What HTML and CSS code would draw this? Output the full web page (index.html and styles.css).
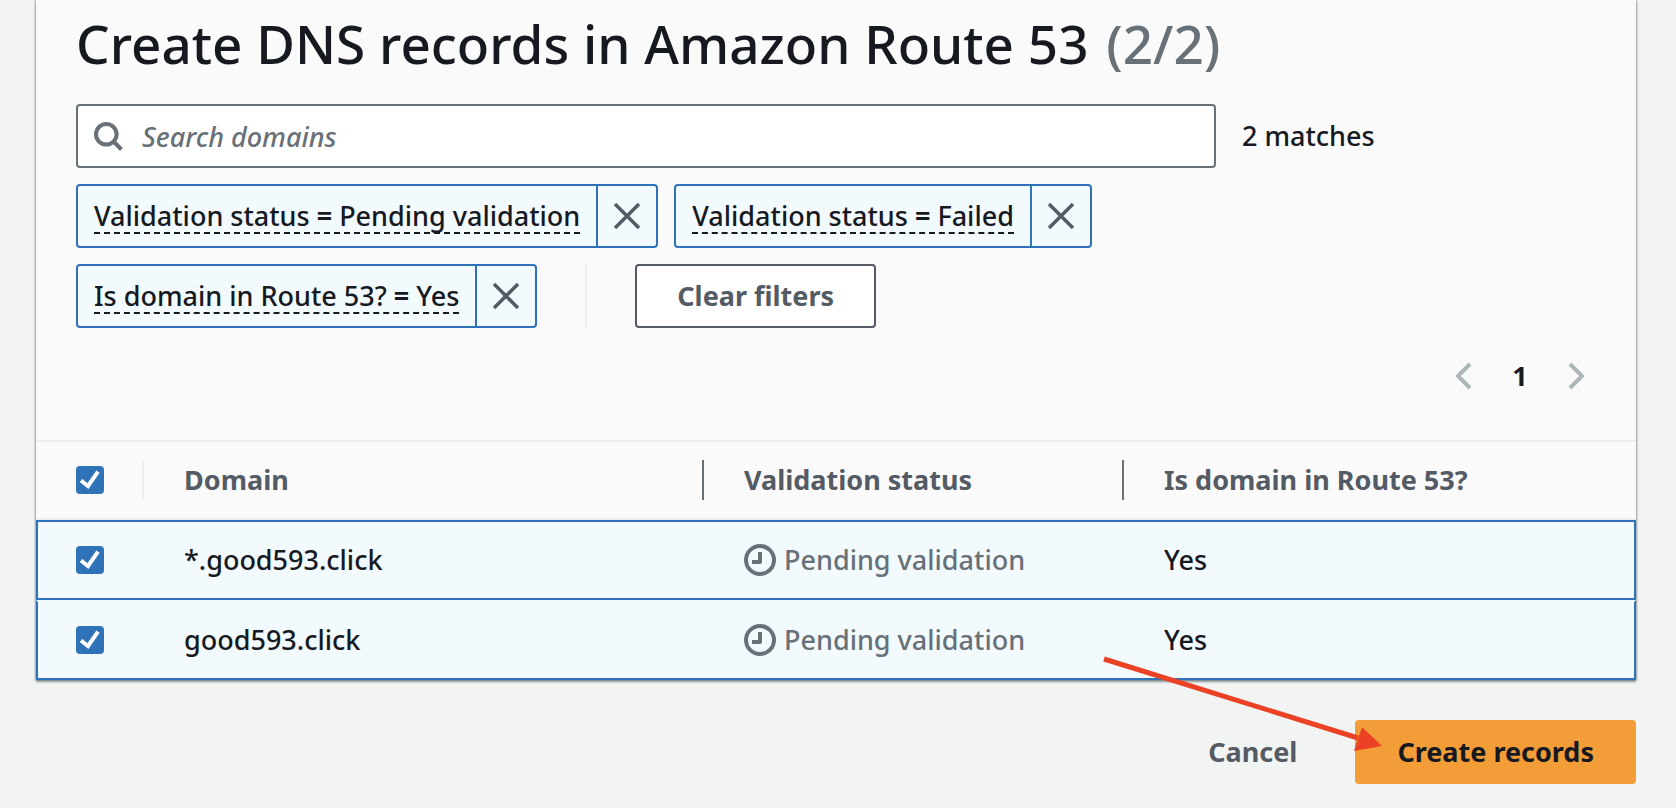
FILE: index.html
```html
<!DOCTYPE html>
<html lang="en">
<head>
<meta charset="utf-8">
<title>Create DNS records in Amazon Route 53</title>
<link rel="stylesheet" href="styles.css">
</head>
<body>
<main class="page">
  <section class="card">
    <header class="card-header">
      <h1 class="title">Create DNS records in Amazon Route 53 <span class="counter">(2/2)</span></h1>
      <div class="search-row">
        <label class="search">
          <svg class="search-icon" viewBox="0 0 32 32" aria-hidden="true"><circle cx="12.300" cy="14.300" r="10.300"/><path d="M19 21l8.500 8.500"/></svg>
          <input class="search-input" type="search" placeholder="Search domains" aria-label="Search domains">
        </label>
        <span class="matches">2 matches</span>
      </div>
      <div class="filters">
        <div class="token"><button class="token-label"><span class="token-text">Validation status <b>=</b> Pending validation</span></button><button class="token-remove" aria-label="Remove filter"><svg class="icon-close" viewBox="0 0 32 32" aria-hidden="true"><path d="M4 4l24 24M28 4L4 28"/></svg></button></div>
        <div class="token"><button class="token-label"><span class="token-text">Validation status <b>=</b> Failed</span></button><button class="token-remove" aria-label="Remove filter"><svg class="icon-close" viewBox="0 0 32 32" aria-hidden="true"><path d="M4 4l24 24M28 4L4 28"/></svg></button></div>
        <div class="token"><button class="token-label"><span class="token-text">Is domain in Route 53? <b>=</b> Yes</span></button><button class="token-remove" aria-label="Remove filter"><svg class="icon-close" viewBox="0 0 32 32" aria-hidden="true"><path d="M4 4l24 24M28 4L4 28"/></svg></button></div>
        <span class="separator"></span>
        <button class="button button-normal">Clear filters</button>
      </div>
      <nav class="pagination" aria-label="Pagination">
        <button class="page-arrow" disabled aria-label="Previous page"><svg class="icon-chevron" viewBox="0 0 32 32" aria-hidden="true"><path d="M22 4L10 16l12 12"/></svg></button>
        <button class="page-number" aria-current="page">1</button>
        <button class="page-arrow" disabled aria-label="Next page"><svg class="icon-chevron" viewBox="0 0 32 32" aria-hidden="true"><path d="M10 4l12 12-12 12"/></svg></button>
      </nav>
    </header>
    <table class="table">
      <colgroup><col class="col-select"><col class="col-domain"><col class="col-status"><col class="col-route"></colgroup>
      <thead>
        <tr>
          <th class="select-cell"><input class="checkbox" type="checkbox" checked aria-label="Select all domains"></th>
          <th>Domain</th>
          <th>Validation status</th>
          <th>Is domain in Route 53?</th>
        </tr>
      </thead>
      <tbody>
        <tr>
          <td class="select-cell"><input class="checkbox" type="checkbox" checked aria-label="Select *.good593.click"></td>
          <td>*.good593.click</td>
          <td><span class="status"><svg class="icon-clock" viewBox="0 0 32 32" aria-hidden="true"><circle cx="16" cy="16" r="14"/><path d="M16 8v10H8"/></svg>Pending validation</span></td>
          <td>Yes</td>
        </tr>
        <tr>
          <td class="select-cell"><input class="checkbox" type="checkbox" checked aria-label="Select good593.click"></td>
          <td>good593.click</td>
          <td><span class="status"><svg class="icon-clock" viewBox="0 0 32 32" aria-hidden="true"><circle cx="16" cy="16" r="14"/><path d="M16 8v10H8"/></svg>Pending validation</span></td>
          <td>Yes</td>
        </tr>
      </tbody>
    </table>
  </section>
  <footer class="actions">
    <button class="button button-link">Cancel</button>
    <button class="button button-primary">Create records</button>
    <svg class="pointer" viewBox="0 0 280 96" aria-hidden="true"><path class="pointer-line" d="M2 3L256 82"/><path class="pointer-head" d="M260 71L252 95l28-5z"/></svg>
  </footer>
</main>
</body>
</html>
```
FILE: styles.css
```css
* {
  box-sizing: border-box;
}

body {
  margin: 0;
  background: #f2f3f3;
  color: #16191f;
  font: 500 27px/40px "Noto Sans", "Open Sans", sans-serif;
}

button,
input {
  font: inherit;
  color: inherit;
}

button {
  margin: 0;
  padding: 0;
  border: 0;
  background: none;
}

svg {
  display: block;
  fill: none;
}

.page {
  padding: 0 40px 24px 36px;
}

.card {
  background: #fafafa;
  box-shadow: 0 2px 2px rgba(0, 28, 36, 0.4), 1px 0 2px rgba(0, 28, 36, 0.25), -1px 0 2px rgba(0, 28, 36, 0.25);
}

.card-header {
  padding: 8px 40px 32px;
  border-bottom: 2px solid #eaeded;
}

.title {
  margin: 0 0 24px;
  font-size: 53px;
  line-height: 72px;
  font-weight: 500;
}

.counter {
  margin-left: 4px;
  color: #687078;
}

.search-row {
  display: flex;
  align-items: center;
  gap: 26px;
  margin-bottom: 16px;
}

.search {
  display: flex;
  align-items: center;
  gap: 16px;
  width: 75%;
  height: 64px;
  padding: 0 16px;
  border: 2px solid #687078;
  border-radius: 4px;
  background: #fff;
}

.search-icon {
  flex: none;
  width: 32px;
  height: 32px;
  stroke: #687078;
  stroke-width: 4;
}

.search-input {
  flex: 1;
  min-width: 0;
  padding: 2px 0 0;
  border: 0;
  outline: 0;
  background: none;
}

.search-input::placeholder {
  color: #687078;
  font-style: italic;
  opacity: 1;
}

.filters {
  display: flex;
  flex-wrap: wrap;
  gap: 16px;
  width: 75%;
}

.token {
  display: flex;
  height: 64px;
  border: 2px solid #2e73b8;
  border-radius: 4px;
  background: #f2fafd;
}

.token-label {
  padding: 2px 16px 0;
}

.token-text {
  display: block;
  line-height: 32px;
  border-bottom: 2px dashed #16191f;
}

.token-remove {
  display: flex;
  align-items: center;
  justify-content: center;
  width: 60px;
  border-left: 2px solid #2e73b8;
}

.icon-close {
  width: 32px;
  height: 32px;
  stroke: #545b64;
  stroke-width: 3.5;
}

.separator {
  width: 2px;
  height: 64px;
  margin: 0 32px;
  background: #eaeded;
}

.button {
  height: 64px;
  padding: 0 40px;
  border: 2px solid transparent;
  border-radius: 4px;
  font-weight: 700;
}

.button-normal {
  border-color: #545b64;
  background: #fff;
  color: #545b64;
}

.button-link {
  color: #545b64;
}

.button-primary {
  border: 0;
  padding: 0 42px;
  background: #f29d38;
}

.pagination {
  display: flex;
  justify-content: flex-end;
  align-items: center;
  gap: 24px;
  margin-top: 16px;
  padding: 12px 4px;
}

.page-arrow,
.page-number {
  width: 32px;
  height: 40px;
  font-weight: 700;
}

.page-arrow {
  display: flex;
  align-items: center;
}

.icon-chevron {
  width: 32px;
  height: 32px;
  stroke: #aab7b8;
  stroke-width: 4;
}

.table {
  width: 100%;
  border-collapse: separate;
  border-spacing: 0;
  table-layout: fixed;
}

.col-select {
  width: 108px;
}

.col-domain {
  width: 35%;
}

.col-status {
  width: 420px;
}

.table th,
.table td {
  height: 80px;
  padding: 0 40px;
  text-align: left;
}

.table th {
  height: 78px;
  border-bottom: 2px solid #eaeded;
  color: #545b64;
  font-weight: 700;
  background: linear-gradient(#687078, #687078) right center / 2px 40px no-repeat;
}

.table th:last-child {
  background: none;
}

.table th.select-cell {
  background-image: linear-gradient(#eaeded, #eaeded);
}

.table td {
  background: #f2fafd;
  border-top: 2px solid #f2fafd;
  border-bottom: 2px solid #2e73b8;
}

.table td:first-child {
  border-left: 2px solid #2e73b8;
}

.table td:last-child {
  border-right: 2px solid #2e73b8;
}

.table tbody tr:first-child td {
  border-top: 2px solid #2e73b8;
}

.table .select-cell {
  padding-right: 0;
}

.table td.select-cell {
  padding-left: 38px;
}

.checkbox {
  display: block;
  width: 28px;
  height: 28px;
  margin: 0;
  appearance: none;
  border-radius: 4px;
  background: #2e73b8;
}

.checkbox:checked {
  background: #2e73b8 url("data:image/svg+xml,%3Csvg xmlns='http://www.w3.org/2000/svg' viewBox='0 0 28 28'%3E%3Cpath d='M5 14.500l7 5.500L22 5.700' fill='none' stroke='white' stroke-width='4'/%3E%3C/svg%3E") center / 28px 28px no-repeat;
}

.status {
  display: flex;
  align-items: center;
  gap: 8px;
  color: #687078;
}

.icon-clock {
  width: 32px;
  height: 32px;
  stroke: currentColor;
  stroke-width: 4;
  stroke-linejoin: round;
}

.actions {
  position: relative;
  display: flex;
  justify-content: flex-end;
  gap: 16px;
  margin-top: 40px;
}

.pointer {
  position: absolute;
  right: 254px;
  bottom: 32px;
  width: 280px;
  height: 96px;
}

.pointer-line {
  stroke: #eb4226;
  stroke-width: 5;
}

.pointer-head {
  fill: #eb4226;
}
```
